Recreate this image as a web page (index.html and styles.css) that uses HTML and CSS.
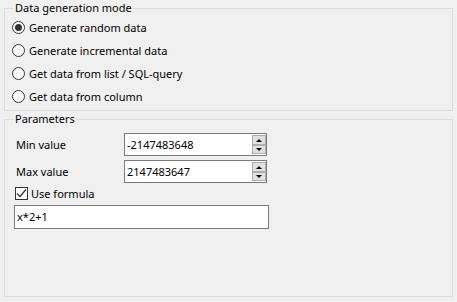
FILE: index.html
```html
<!DOCTYPE html>
<html lang="en">
<head>
  <meta charset="UTF-8" />
  <title>Data generation</title>
  <link rel="stylesheet" href="styles.css">
</head>
<body>

  <!-- Mode selection -->
  <fieldset class="group mode-group">
    <legend>Data generation mode</legend>
    <label class="radio-row"><span class="radio checked"></span>Generate random data</label>
    <label class="radio-row"><span class="radio"></span>Generate incremental data</label>
    <label class="radio-row"><span class="radio"></span>Get data from list / SQL-query</label>
    <label class="radio-row"><span class="radio"></span>Get data from column</label>
  </fieldset>

  <!-- Parameters -->
  <fieldset class="group params-group">
    <legend>Parameters</legend>
    <div class="field-row">
      <span class="field-label">Min value</span>
      <div class="spin-edit">
        <span class="spin-value">-2147483648</span>
        <div class="spin-buttons">
          <span class="spin-btn up"></span>
          <span class="spin-btn down"></span>
        </div>
      </div>
    </div>
    <div class="field-row">
      <span class="field-label">Max value</span>
      <div class="spin-edit">
        <span class="spin-value">2147483647</span>
        <div class="spin-buttons">
          <span class="spin-btn up"></span>
          <span class="spin-btn down"></span>
        </div>
      </div>
    </div>
    <label class="check-row">
      <span class="checkbox">
        <svg width="11" height="11" viewBox="0 0 11 11"><path d="M1 5.5 L4 8.5 L10 1.5" fill="none" stroke="#333" stroke-width="1.2"/></svg>
      </span>
      Use formula
    </label>
    <div class="text-edit">x*2+1</div>
  </fieldset>

</body>
</html>
```

FILE: styles.css
```css
body {
  margin: 0;
  background: #f0f0f0;
  font-family: 'Noto Sans', sans-serif;
  font-size: 11px;
  color: #000;
}
.group {
  margin: 0 0 0 4px;
  width: 449px;
  box-sizing: border-box;
  border: 1px solid #dcdcdc;
  padding: 0 7px;
}
.group legend {
  margin-left: 2px;
  padding: 0 1px;
  line-height: 16px;
}
.mode-group {
  padding-bottom: 2px;
}
.radio-row {
  display: flex;
  align-items: center;
  height: 23px;
}
.radio {
  width: 13px;
  height: 13px;
  box-sizing: border-box;
  border: 1px solid #333;
  border-radius: 50%;
  background: #fff;
  margin-right: 4px;
  display: flex;
  align-items: center;
  justify-content: center;
}
.radio.checked::after {
  content: '';
  width: 7px;
  height: 7px;
  border-radius: 50%;
  background: #333;
}
.params-group {
  height: 186px;
  padding-top: 6px;
}
.field-row {
  display: flex;
  align-items: center;
  margin-bottom: 4px;
}
.field-label {
  width: 108px;
  padding-left: 4px;
}
.spin-edit {
  width: 143px;
  height: 23px;
  box-sizing: border-box;
  border: 1px solid #7a7a7a;
  background: #fff;
  display: flex;
  align-items: center;
  justify-content: space-between;
}
.spin-value {
  padding-left: 2px;
}
.spin-buttons {
  display: flex;
  flex-direction: column;
}
.spin-btn {
  width: 14px;
  height: 10px;
  box-sizing: border-box;
  border: 1px solid #adadad;
  background: #e1e1e1;
  display: flex;
  align-items: center;
  justify-content: center;
}
.spin-btn.down {
  height: 9px;
}
.spin-btn.up::after {
  content: '';
  border-left: 3px solid transparent;
  border-right: 3px solid transparent;
  border-bottom: 3px solid #000;
}
.spin-btn.down::after {
  content: '';
  border-left: 3px solid transparent;
  border-right: 3px solid transparent;
  border-top: 3px solid #000;
}
.check-row {
  display: flex;
  align-items: center;
  height: 14px;
  margin-top: -1px;
  padding-left: 3px;
}
.checkbox {
  width: 13px;
  height: 13px;
  box-sizing: border-box;
  border: 1px solid #333;
  background: #fff;
  margin-right: 3px;
  display: flex;
  align-items: center;
  justify-content: center;
}
.text-edit {
  margin-top: 5px;
  margin-left: 2px;
  width: 255px;
  height: 24px;
  box-sizing: border-box;
  border: 1px solid #7a7a7a;
  background: #fff;
  padding-left: 2px;
  line-height: 22px;
}
```
